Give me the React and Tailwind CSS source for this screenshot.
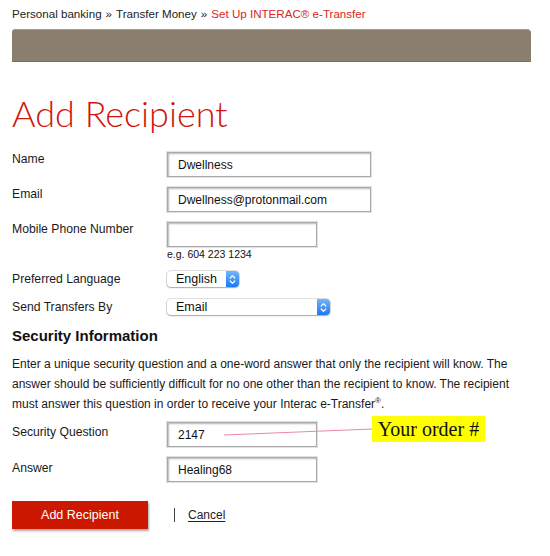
import React from "react";

function TextBox({ w, value }) {
  return (
    <div
      className={`${w} h-[25px] flex items-center pl-[10px] bg-white border border-[#a9a9a9] shadow-[inset_1px_1px_2px_rgba(0,0,0,0.28),0_0_0_1px_#e2e2e2] text-[12px] text-[#111]`}
    >
      {value}
    </div>
  );
}

function Stepper() {
  return (
    <div className="w-[13px] self-stretch rounded-r-[4px] bg-gradient-to-b from-[#6fb5fb] to-[#1b78f2] flex items-center justify-center">
      <svg width="7" height="11" viewBox="0 0 7 11" fill="none" stroke="white" strokeWidth="1.2" strokeLinecap="round" strokeLinejoin="round">
        <path d="M1.2 4 L3.5 1.7 L5.8 4" />
        <path d="M1.2 7 L3.5 9.3 L5.8 7" />
      </svg>
    </div>
  );
}

function SelectBox({ w, value }) {
  return (
    <div
      className={`${w} h-[16px] flex items-stretch bg-white rounded-[4px] shadow-[0_0_0_1px_rgba(0,0,0,0.12),0_1px_1.5px_rgba(0,0,0,0.25)]`}
    >
      <div className="flex-1 flex items-center pl-[9px] text-[12.5px] text-[#111] leading-none">{value}</div>
      <Stepper />
    </div>
  );
}

function Label({ children, className = "" }) {
  return (
    <div className={`w-[155px] shrink-0 text-[12.2px] leading-[14px] text-[#1a1a1a] ${className}`}>
      {children}
    </div>
  );
}

export default function App() {
  return (
    <div className="relative w-[550px] h-[556px] bg-white overflow-hidden font-['Liberation_Sans',Arial,sans-serif] text-[#1a1a1a] pl-[12px]">
      {/* breadcrumb */}
      <div className="pt-[7px] text-[11.6px] leading-[14px] text-[#222] whitespace-nowrap">
        <span>Personal banking</span>
        <span className="mx-[4px]">»</span>
        <span>Transfer Money</span>
        <span className="mx-[4px]">»</span>
        <span className="text-[#d8271a]">Set Up INTERAC® e-Transfer</span>
      </div>

      {/* brown bar */}
      <div className="mt-[8px] w-[519px] h-[33px] bg-[#8a7e6c] rounded-tl-[3px] rounded-tr-[4px] border-t border-[#a59b8a] border-b border-b-[#7b705f]"></div>

      {/* heading */}
      <h1 className="mt-[28px] font-['Lato',sans-serif] font-light text-[36px] leading-[46px] text-[#d0160b]">
        Add Recipient
      </h1>

      {/* form */}
      <div className="mt-[16px] flex flex-col">
        <div className="flex">
          <Label>Name</Label>
          <TextBox w="w-[204px]" value="Dwellness" />
        </div>
        <div className="flex mt-[10px]">
          <Label>Email</Label>
          <TextBox w="w-[204px]" value="Dwellness@protonmail.com" />
        </div>
        <div className="flex mt-[10px]">
          <Label>Mobile Phone Number</Label>
          <div className="flex flex-col">
            <TextBox w="w-[150px]" value="" />
            <div className="mt-[1px] text-[10.5px] leading-[12px] text-[#111]">e.g. 604 223 1234</div>
          </div>
        </div>
        <div className="flex items-center mt-[11px]">
          <Label>Preferred Language</Label>
          <SelectBox w="w-[72px]" value="English" />
        </div>
        <div className="flex items-center mt-[12px]">
          <Label>Send Transfers By</Label>
          <SelectBox w="w-[163px]" value="Email" />
        </div>

        <h2 className="mt-[12px] text-[15px] leading-[18px] font-bold text-[#111]">Security Information</h2>
        <p className="mt-[9px] w-[522px] text-[12px] leading-[20px] text-[#1a1a1a]">
          Enter a unique security question and a one-word answer that only the recipient will know. The answer should be sufficiently difficult for no one other than the recipient to know. The recipient must answer this question in order to receive your Interac e-Transfer
          <span className="relative top-[-5px] text-[8px] leading-none">®</span>.
        </p>

        <div className="flex mt-[8px]">
          <Label className="pt-[3px]">Security Question</Label>
          <TextBox w="w-[150px]" value="2147" />
        </div>
        <div className="flex mt-[10px]">
          <Label className="pt-[4px]">Answer</Label>
          <TextBox w="w-[150px]" value="Healing68" />
        </div>

        <div className="flex items-center mt-[19px]">
          <button className="w-[136px] h-[28px] bg-[#cc1800] text-white text-[12.5px] shadow-[1px_2px_2px_rgba(0,0,0,0.35)]">
            Add Recipient
          </button>
          <span className="ml-[26px] w-[1px] h-[14px] bg-[#444]"></span>
          <span className="ml-[13px] text-[12px] text-[#222] underline underline-offset-[2px]">Cancel</span>
        </div>
      </div>

      {/* annotation overlay */}
      <svg className="absolute left-0 top-0 pointer-events-none" width="550" height="556">
        <line x1="224" y1="435" x2="372" y2="429" stroke="#e98aa0" strokeWidth="1" />
      </svg>
      <div className="absolute left-[372px] top-[416px] w-[113px] h-[26px] bg-[#ffff00] flex items-center justify-center font-['Liberation_Serif',serif] text-[20px] text-[#111] leading-none">
        Your order #
      </div>
    </div>
  );
}
